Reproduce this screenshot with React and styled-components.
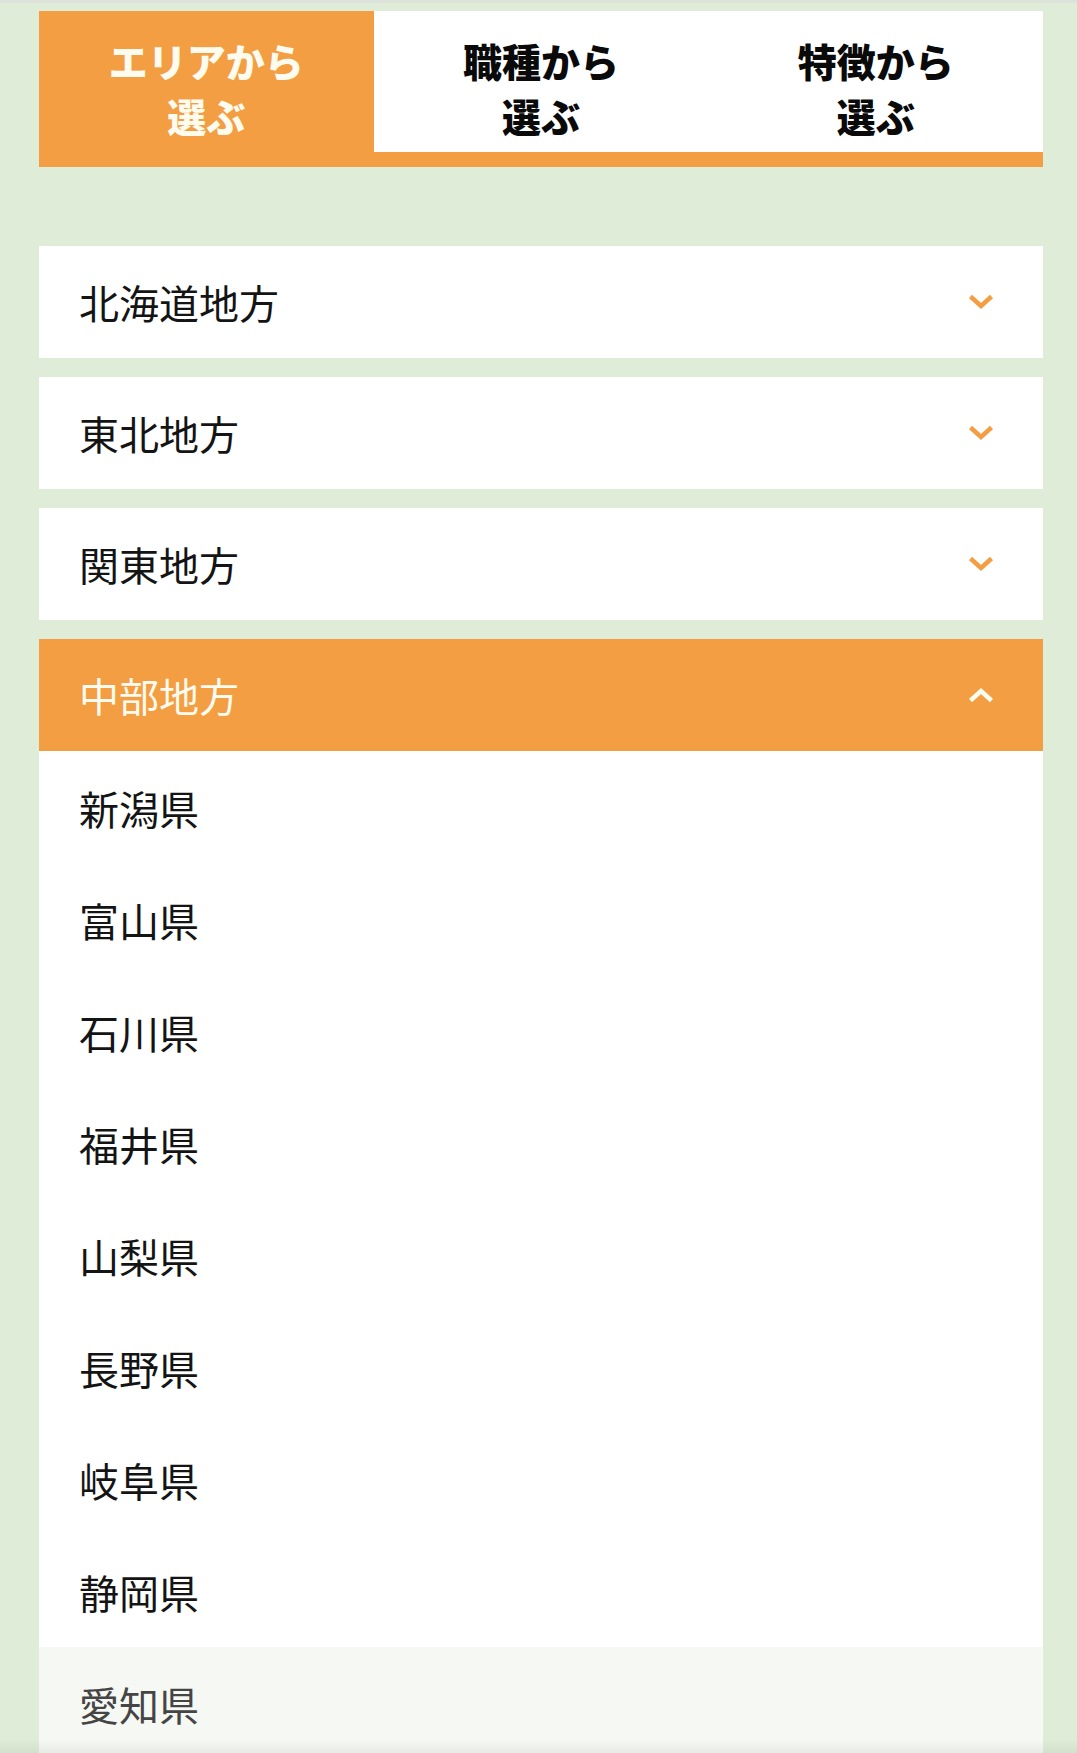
import styled, { createGlobalStyle } from "styled-components";

const GlobalStyle = createGlobalStyle`
  html, body {
    margin: 0;
    padding: 0;
    background: #dfedd8;
  }
  body {
    font-family: "Noto Sans CJK JP", "Noto Sans", sans-serif;
    color: #141414;
  }
`;

const ORANGE = "#f39e42";

const Page = styled.div`
  min-height: 1753px;
  padding: 11px 34px 0 39px;
  box-sizing: border-box;
  background: linear-gradient(#dde2da 0, #dde2da 3px, #dfedd8 3px);
`;

const BottomShade = styled.div`
  position: fixed;
  left: 0;
  right: 0;
  bottom: 0;
  height: 14px;
  background: linear-gradient(rgba(0, 0, 0, 0), rgba(0, 0, 0, 0.05));
  pointer-events: none;
`;

const Tabs = styled.div`
  display: grid;
  grid-template-columns: repeat(3, 1fr);
  background: #fff;
`;

const Tab = styled.button`
  height: 156px;
  border: 0;
  padding: 0 0 2px;
  display: flex;
  align-items: center;
  justify-content: center;
  font-family: inherit;
  font-size: 39px;
  font-weight: 900;
  line-height: 55px;
  text-align: center;
  cursor: pointer;
  background: ${(p) => (p.active ? ORANGE : "#fff")};
  color: ${(p) => (p.active ? "#fffbee" : "#0a0a0a")};
  box-shadow: inset 0 -15px 0 ${ORANGE};
`;

const Regions = styled.div`
  margin-top: 79px;
  display: flex;
  flex-direction: column;
  gap: 19px;
`;

const Group = styled.div`
  display: flex;
  flex-direction: column;
`;

const Header = styled.div`
  height: 112px;
  display: flex;
  align-items: center;
  justify-content: space-between;
  padding: 0 49px 0 40px;
  font-size: 40px;
  background: ${(p) => (p.open ? ORANGE : "#fff")};
  color: ${(p) => (p.open ? "#fffbee" : "#141414")};
  cursor: pointer;
`;

const Chevron = styled.svg`
  width: 26px;
  height: 16px;
  flex: none;
`;

const Item = styled.div`
  height: 112px;
  display: flex;
  align-items: center;
  padding: 2px 0 0 40px;
  box-sizing: border-box;
  font-size: 40px;
  background: ${(p) => (p.hover ? "#f6f8f3" : "#fff")};
  color: ${(p) => (p.hover ? "#454545" : "#141414")};
`;

const regions = [
  { name: "北海道地方" },
  { name: "東北地方" },
  { name: "関東地方" },
  {
    name: "中部地方",
    open: true,
    prefs: ["新潟県", "富山県", "石川県", "福井県", "山梨県", "長野県", "岐阜県", "静岡県", "愛知県"],
  },
];

const Arrow = ({ up, color }) => (
  <Chevron viewBox="0 0 26 16">
    <path
      d={up ? "M2.5 13.5 L13 4 L23.5 13.5" : "M2.5 2.5 L13 12 L23.5 2.5"}
      fill="none"
      stroke={color}
      strokeWidth="4.5"
    />
  </Chevron>
);

export default function App() {
  return (
    <Page>
      <GlobalStyle />
      <Tabs>
        <Tab active>
          エリアから
          <br />
          選ぶ
        </Tab>
        <Tab>
          職種から
          <br />
          選ぶ
        </Tab>
        <Tab>
          特徴から
          <br />
          選ぶ
        </Tab>
      </Tabs>
      <Regions>
        {regions.map((r) => (
          <Group key={r.name}>
            <Header open={r.open}>
              {r.name}
              <Arrow up={r.open} color={r.open ? "#fffbee" : ORANGE} />
            </Header>
            {r.prefs &&
              r.prefs.map((p) => (
                <Item key={p} hover={p === "愛知県"}>
                  {p}
                </Item>
              ))}
          </Group>
        ))}
      </Regions>
      <BottomShade />
    </Page>
  );
}
